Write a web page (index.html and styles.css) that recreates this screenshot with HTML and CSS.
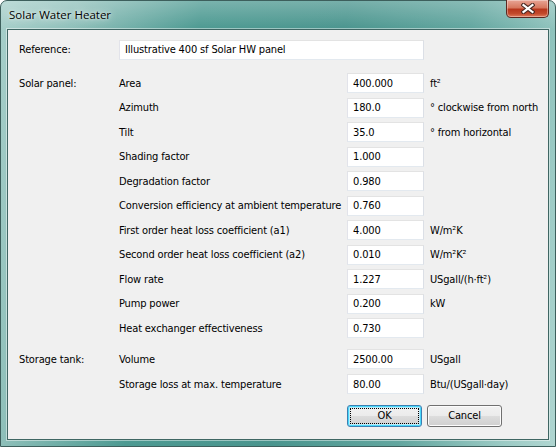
FILE: index.html
```html
<!DOCTYPE html>
<html lang="en">
<head>
  <meta charset="UTF-8">
  <title>Solar Water Heater</title>
  <link rel="stylesheet" href="styles.css">
</head>
<body>
  <div class="window">
    <div class="titlebar">
      <span class="title">Solar Water Heater</span>
      <button class="close-btn" aria-label="Close">
        <svg width="14" height="11" viewBox="0 0 14 11">
          <path d="M2.5 2 L11.5 9 M11.5 2 L2.5 9" stroke="#4a2a24" stroke-width="4.2" stroke-linecap="square"/>
          <path d="M2.5 2 L11.5 9 M11.5 2 L2.5 9" stroke="#fff" stroke-width="2.2" stroke-linecap="square"/>
        </svg>
      </button>
    </div>

    <div class="client">
      <div class="row ref-row">
        <div class="section-label">Reference:</div>
        <input class="text-input ref-input" type="text" value="Illustrative 400 sf Solar HW panel">
      </div>

      <div class="group solar">
        <div class="row">
          <div class="section-label">Solar panel:</div>
          <div class="field">Area</div>
          <input class="text-input" type="text" value="400.000">
          <div class="unit">ft²</div>
        </div>
        <div class="row">
          <div class="section-label"></div>
          <div class="field">Azimuth</div>
          <input class="text-input" type="text" value="180.0">
          <div class="unit">° clockwise from north</div>
        </div>
        <div class="row">
          <div class="section-label"></div>
          <div class="field">Tilt</div>
          <input class="text-input" type="text" value="35.0">
          <div class="unit">° from horizontal</div>
        </div>
        <div class="row">
          <div class="section-label"></div>
          <div class="field">Shading factor</div>
          <input class="text-input" type="text" value="1.000">
        </div>
        <div class="row">
          <div class="section-label"></div>
          <div class="field">Degradation factor</div>
          <input class="text-input" type="text" value="0.980">
        </div>
        <div class="row">
          <div class="section-label"></div>
          <div class="field">Conversion efficiency at ambient temperature</div>
          <input class="text-input" type="text" value="0.760">
        </div>
        <div class="row">
          <div class="section-label"></div>
          <div class="field">First order heat loss coefficient (a1)</div>
          <input class="text-input" type="text" value="4.000">
          <div class="unit">W/m²K</div>
        </div>
        <div class="row">
          <div class="section-label"></div>
          <div class="field">Second order heat loss coefficient (a2)</div>
          <input class="text-input" type="text" value="0.010">
          <div class="unit">W/m²K²</div>
        </div>
        <div class="row">
          <div class="section-label"></div>
          <div class="field">Flow rate</div>
          <input class="text-input" type="text" value="1.227">
          <div class="unit">USgall/(h·ft²)</div>
        </div>
        <div class="row">
          <div class="section-label"></div>
          <div class="field">Pump power</div>
          <input class="text-input" type="text" value="0.200">
          <div class="unit">kW</div>
        </div>
        <div class="row">
          <div class="section-label"></div>
          <div class="field">Heat exchanger effectiveness</div>
          <input class="text-input" type="text" value="0.730">
        </div>
      </div>

      <div class="group tank">
        <div class="row">
          <div class="section-label">Storage tank:</div>
          <div class="field">Volume</div>
          <input class="text-input" type="text" value="2500.00">
          <div class="unit">USgall</div>
        </div>
        <div class="row">
          <div class="section-label"></div>
          <div class="field">Storage loss at max. temperature</div>
          <input class="text-input" type="text" value="80.00">
          <div class="unit">Btu/(USgall·day)</div>
        </div>
      </div>

      <div class="buttons">
        <button class="btn btn-default"><span>OK</span></button>
        <button class="btn">Cancel</button>
      </div>
    </div>
  </div>
</body>
</html>
```

FILE: styles.css
```css
* {
  margin: 0;
  padding: 0;
  box-sizing: border-box;
}

body {
  width: 556px;
  height: 447px;
  overflow: hidden;
  background: #ffffff;
  font-family: "DejaVu Sans Condensed", "DejaVu Sans", sans-serif;
  font-stretch: condensed;
  font-size: 11px;
  letter-spacing: -0.15px;
  color: #000;
}

.window {
  width: 556px;
  height: 447px;
  border: 1px solid #3d5f5c;
  border-radius: 7px 7px 0 0;
  background:
    linear-gradient(180deg, rgba(255, 255, 255, 0.25) 0%, rgba(255, 255, 255, 0) 28px),
    linear-gradient(100deg, #a7cfca 0%, #8fc0ba 12%, #4d9a92 32%, #4a958e 55%, #62a69f 75%, #9ccbc5 92%, #b0d6d1 100%);
  display: flex;
  flex-direction: column;
  padding: 0 6px 6px 6px;
}

.titlebar {
  height: 28px;
  display: flex;
  align-items: flex-start;
  justify-content: space-between;
}

.title {
  font-family: "Open Sans", "Noto Sans", sans-serif;
  font-stretch: normal;
  letter-spacing: 0;
  font-size: 11.5px;
  margin-top: 6px;
  margin-left: 2px;
  color: #000;
  text-shadow: 0 0 8px rgba(255, 255, 255, 0.9), 0 0 3px rgba(255, 255, 255, 0.8);
}

.close-btn {
  width: 43px;
  height: 18px;
  margin-top: -1px;
  margin-right: 0;
  border: 1px solid #5b2820;
  border-top: none;
  border-radius: 0 0 5px 5px;
  background: linear-gradient(180deg, #e8a596 0%, #d7785f 45%, #b8371d 55%, #c24a2c 80%, #e07b5c 100%);
  box-shadow: inset 0 0 0 1px rgba(255, 255, 255, 0.35);
  display: flex;
  align-items: center;
  justify-content: center;
}

.client {
  flex: 1;
  background: #f0f0f0;
  border: 1px solid #3f6663;
  box-shadow: 0 0 0 1px rgba(255, 255, 255, 0.45);
  padding: 8px 0 0 11px;
}

.row {
  display: grid;
  grid-template-columns: 100px 228px 77px auto;
  align-items: center;
  height: 24.5px;
  white-space: nowrap;
}

.ref-row {
  grid-template-columns: 100px 305px;
  height: 23px;
}

.ref-input {
  height: 23px;
}

.solar {
  margin-top: 10px;
}

.tank {
  margin-top: 6px;
}

.tank .row {
  height: 25px;
}

.unit {
  padding-left: 6px;
}

.text-input {
  height: 20px;
  width: 100%;
  border: 1px solid #abadb3;
  border-top-color: #e3e3e3;
  border-left-color: #e2e3ea;
  border-right-color: #dbdfe6;
  border-bottom-color: #e3e9ef;
  background: #fff;
  font-family: inherit;
  font-stretch: inherit;
  letter-spacing: inherit;
  font-size: 11px;
  padding: 0 5px;
  color: #000;
  outline: none;
}

.buttons {
  display: flex;
  gap: 5px;
  margin-left: 328px;
  margin-top: 8px;
}

.btn {
  width: 75px;
  height: 22px;
  border: 1px solid #707070;
  border-radius: 3px;
  background: linear-gradient(180deg, #f2f2f2 0%, #ebebeb 50%, #dddddd 51%, #cfcfcf 100%);
  box-shadow: inset 0 0 0 1px #fcfcfc;
  font-family: inherit;
  font-stretch: inherit;
  letter-spacing: inherit;
  font-size: 11px;
  color: #000;
}

.btn-default {
  border-color: #3c7fb1;
  box-shadow: inset 0 0 0 1px #48d8fb, inset 0 0 0 2px #bde9f8;
  padding: 2px;
}

.btn-default span {
  display: block;
  height: 100%;
  border: 1px dotted #000;
  line-height: 14px;
}
```
